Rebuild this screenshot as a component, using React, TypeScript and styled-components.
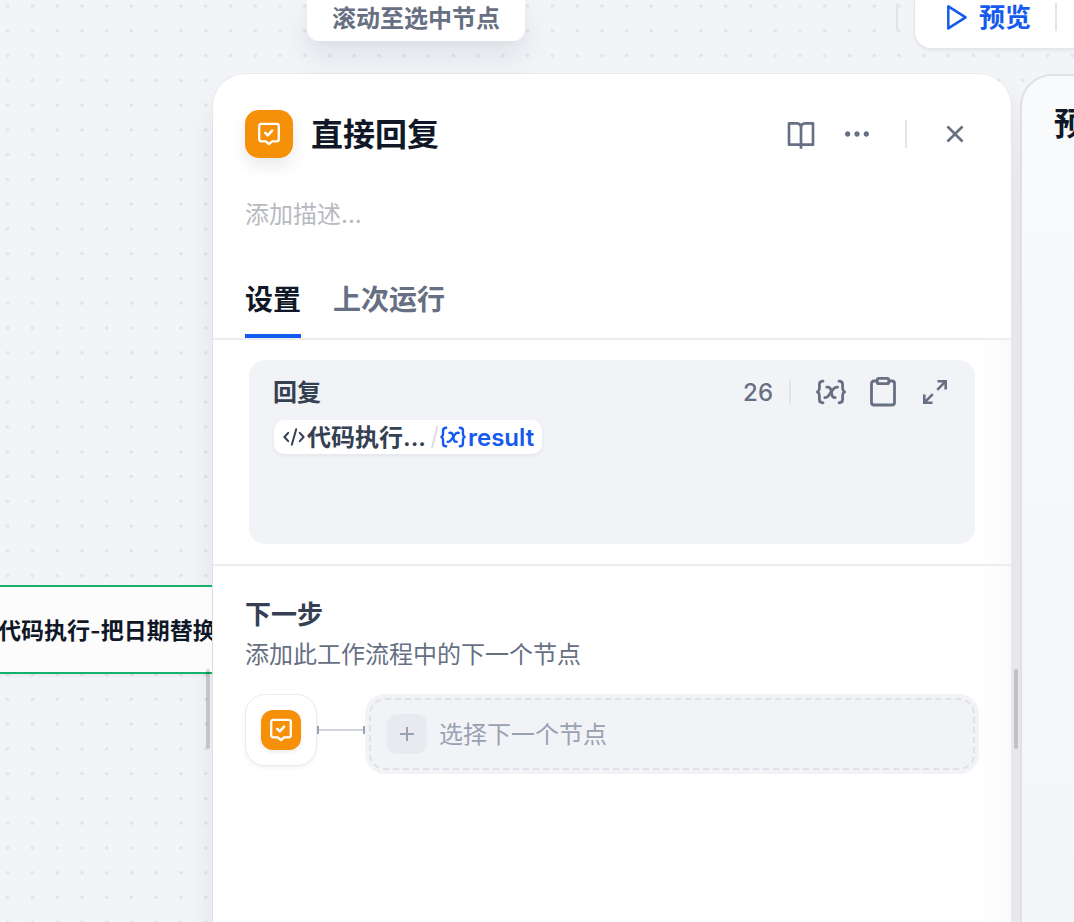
import React, { useState } from "react";
import styled, { createGlobalStyle } from "styled-components";
import { RiAddLine, RiBookOpenLine, RiCloseLine, RiMoreFill } from "react-icons/ri";

const color = {
  title: "#101828",
  text: "#354052",
  muted: "#676f83",
  faint: "#98a2b2",
  placeholder: "#b8bac0",
  blue: "#155aef",
  orange: "#f79009",
  green: "#17b26a",
  canvas: "#f2f4f8",
  field: "#f2f3f7",
  line: "#ededf0",
};

const GlobalStyle = createGlobalStyle`
  *, *::before, *::after { box-sizing: border-box; }
  body {
    margin: 0;
    background: ${color.canvas};
    font-family: Inter, "Noto Sans CJK SC", sans-serif;
    color: ${color.text};
    overflow: hidden;
  }
  button, input { font: inherit; color: inherit; border: 0; background: none; padding: 0; margin: 0; }
  button { cursor: pointer; }
  h1, h2, h3, p { margin: 0; }
  svg { display: block; flex: none; }
`;

const Page = styled.div`
  position: relative;
  display: flex;
  flex-direction: column;
  min-height: 100vh;
  overflow: hidden;
`;

const DotGrid = styled.svg`
  position: absolute;
  inset: 0;
  width: 100%;
  height: 100%;
`;

const TopBar = styled.header`
  position: relative;
  display: flex;
  align-items: flex-start;
  justify-content: space-between;
  height: 74px;
  padding-left: 307px;
`;

const ScrollButton = styled.button`
  height: 41px;
  padding: 0 25px 4px;
  border-radius: 0 0 12px 12px;
  background: #fff;
  box-shadow: 0 16px 32px rgba(16, 24, 40, 0.08), 0 4px 8px rgba(16, 24, 40, 0.03);
  color: ${color.muted};
  font-size: 24px;
  font-weight: 600;
  line-height: 36px;
  white-space: nowrap;
`;

const TopActions = styled.div`
  display: flex;
  align-items: flex-start;
  gap: 17px;
`;

const Divider = styled.span<{ $height: number; $top?: number }>`
  flex: none;
  width: 2px;
  height: ${(p) => p.$height}px;
  margin-top: ${(p) => p.$top ?? 0}px;
  background: #e3e4e8;
`;

const RunBar = styled.div`
  display: flex;
  align-items: flex-start;
  width: 159px;
  height: 48px;
  padding-left: 29px;
  border-radius: 0 0 0 16px;
  background: #fff;
  box-shadow: 0 0 0 1px #e3e5ea, 0 2px 4px rgba(16, 24, 40, 0.08);
`;

const PreviewButton = styled.button`
  display: flex;
  align-items: center;
  gap: 11px;
  height: 36px;
  margin-right: 24px;
  color: ${color.blue};
  font-size: 26px;
  font-weight: 600;
  line-height: 36px;
  white-space: nowrap;
`;

const Main = styled.main`
  position: relative;
  display: flex;
  flex: 1;
`;

const CanvasColumn = styled.div`
  position: relative;
  flex: none;
  width: 213px;
`;

const FlowNode = styled.div`
  position: absolute;
  top: 511px;
  left: -40px;
  right: 1px;
  height: 89px;
  padding: 3px 0 0 38px;
  overflow: hidden;
  border: 2px solid ${color.green};
  border-width: 2px 0;
  background: #fcfcfd;
  box-shadow: 0 2px 4px rgba(16, 24, 40, 0.05);
  color: ${color.title};
  font-size: 23px;
  font-weight: 600;
  line-height: 82px;
  white-space: nowrap;
`;

const Handle = styled.span`
  width: 4px;
  height: 80px;
  margin-top: 595px;
  border-radius: 2px;
  background: rgba(0, 0, 0, 0.17);
`;

const CanvasHandle = styled(Handle)`
  position: absolute;
  top: 0;
  right: 3px;
`;

const Gutter = styled.div`
  display: flex;
  flex: none;
  justify-content: center;
  width: 9px;
  background: linear-gradient(rgba(231, 232, 236, 0) 20px, #e7e8ec 130px);
`;

const Panel = styled.section`
  display: flex;
  flex: 1;
  flex-direction: column;
  min-width: 0;
  border-radius: 32px 32px 0 0;
  background: #fff;
  box-shadow: 0 0 0 1px rgba(16, 24, 40, 0.04), 0 24px 32px rgba(16, 24, 40, 0.08);
`;

const PanelHeader = styled.div`
  display: flex;
  align-items: center;
  padding: 36px 40px 0 32px;
`;

const Badge = styled.span<{ $size: number; $radius: number }>`
  display: grid;
  place-items: center;
  flex: none;
  width: ${(p) => p.$size}px;
  height: ${(p) => p.$size}px;
  border-radius: ${(p) => p.$radius}px;
  background: ${color.orange};
  box-shadow: 0 ${(p) => (p.$size > 40 ? "8px 16px" : "2px 4px")} rgba(16, 24, 40, 0.09);
`;

const Title = styled.h1`
  flex: 1;
  margin-left: 18px;
  padding-top: 2px;
  color: ${color.title};
  font-size: 32px;
  font-weight: 600;
  line-height: 46px;
`;

const HeaderActions = styled.div`
  display: flex;
  align-items: center;
  gap: 24px;
  color: ${color.muted};
`;

const MoreButton = styled.button`
  margin-right: 8px;
`;

const CloseButton = styled.button`
  margin-left: 8px;
`;

const Description = styled.input`
  display: block;
  width: calc(100% - 64px);
  height: 34px;
  margin: 40px 32px 0;
  outline: 0;
  font-size: 24px;
  line-height: 34px;
  &::placeholder { color: ${color.placeholder}; opacity: 1; }
`;

const Tabs = styled.div`
  display: flex;
  gap: 32px;
  margin-top: 32px;
  padding: 0 32px;
  border-bottom: 2px solid ${color.line};
`;

const Tab = styled.button<{ $active: boolean }>`
  padding: 16px 0 14px;
  border-bottom: 4px solid ${(p) => (p.$active ? color.blue : "transparent")};
  color: ${(p) => (p.$active ? color.title : color.muted)};
  font-size: 28px;
  font-weight: 600;
  line-height: 40px;
`;

const PanelBody = styled.div`
  flex: 1;
  background: linear-gradient(to left, #fafafa, #fff 32px);
`;

const ReplySection = styled.div`
  padding: 20px 36px;
  border-bottom: 2px solid ${color.line};
`;

const Editor = styled.div`
  min-height: 184px;
  padding: 12px 24px;
  border-radius: 16px;
  background: ${color.field};
`;

const EditorHeader = styled.div`
  display: flex;
  align-items: center;
  height: 40px;
  color: ${color.muted};
`;

const EditorTitle = styled.h2`
  flex: 1;
  padding-top: 2px;
  color: ${color.text};
  font-size: 24px;
  font-weight: 600;
  line-height: 38px;
`;

const Count = styled.span`
  margin-right: 16px;
  padding-top: 2px;
  font-size: 24px;
  font-weight: 500;
  line-height: 38px;
`;

const EditorTools = styled.div`
  display: flex;
  align-items: center;
  gap: 20px;
  margin-left: 24px;
`;

const Chip = styled.span`
  display: inline-flex;
  align-items: center;
  height: 34px;
  margin: 8px 0 0 1px;
  padding: 0 8px;
  border-radius: 10px;
  background: #fff;
  box-shadow: 0 2px 4px rgba(16, 24, 40, 0.06);
  font-size: 24px;
  font-weight: 600;
  line-height: 32px;
  white-space: nowrap;
`;

const ChipText = styled.span`
  padding-top: 2px;
`;

const ChipSource = styled(ChipText)`
  margin: 0 4px 0 1px;
`;

const ChipVariable = styled.span`
  display: inline-flex;
  align-items: center;
  gap: 1px;
  color: ${color.blue};
`;

const NextSection = styled.div`
  padding: 29px 32px;
`;

const NextTitle = styled.h2`
  font-size: 26px;
  font-weight: 600;
  line-height: 40px;
`;

const NextHint = styled.p`
  color: ${color.muted};
  font-size: 24px;
  line-height: 40px;
`;

const NextRow = styled.div`
  display: flex;
  align-items: flex-start;
  margin-top: 19px;
`;

const NodeTile = styled.div`
  display: grid;
  place-items: center;
  flex: none;
  width: 72px;
  height: 72px;
  border: 1px solid #e9ebf0;
  border-radius: 20px;
  background: #fff;
  box-shadow: 0 2px 4px rgba(16, 24, 40, 0.05);
`;

const Connector = styled.div`
  display: flex;
  align-items: center;
  flex: none;
  width: 48px;
  height: 72px;
  &::before, &::after {
    content: "";
    width: 2px;
    height: 8px;
    background: ${color.faint};
  }
`;

const ConnectorLine = styled.span`
  flex: 1;
  height: 2px;
  background: #d0d5dc;
`;

const AddNext = styled.button`
  flex: 1;
  padding: 4px;
  border-radius: 20px;
  background: ${color.field};
`;

const AddNextInner = styled.span`
  display: flex;
  align-items: center;
  gap: 12px;
  height: 72px;
  padding: 0 16px;
  border: 2px dashed #e0e1e6;
  border-radius: 16px;
  color: ${color.faint};
  font-size: 24px;
  line-height: 36px;
`;

const AddLabel = styled.span`
  padding-top: 2px;
`;

const AddMark = styled.span`
  display: grid;
  place-items: center;
  width: 40px;
  height: 40px;
  border-radius: 10px;
  background: #e9eaef;
`;

const PreviewPanel = styled.aside`
  flex: none;
  width: 54px;
  padding: 28px 0 0 32px;
  overflow: hidden;
  border: 2px solid #e0e1e6;
  border-width: 2px 0 0 2px;
  border-radius: 32px 0 0 0;
  background: linear-gradient(#f9fafb, #f3f5f8);
`;

const PreviewTitle = styled.h2`
  color: ${color.title};
  font-size: 32px;
  font-weight: 600;
  line-height: 40px;
  white-space: nowrap;
`;

const AnswerIcon = () => (
  <svg width="24" height="24" viewBox="0 0 24 24" fill="none" stroke="#fff" strokeWidth="2.3" strokeLinecap="round" strokeLinejoin="round">
    <path d="M4.2 1.9h15.6a2 2 0 0 1 2 2v13.4a2 2 0 0 1-2 2h-4.6L12 22l-3.2-2.7H4.2a2 2 0 0 1-2-2V3.9a2 2 0 0 1 2-2Z" />
    <path d="m8.3 10.9 2.5 2.4 4.3-4.6" strokeWidth="2.5" />
  </svg>
);

const PlayIcon = () => (
  <svg width="24" height="28" viewBox="0 0 24 28" fill="none" stroke="currentColor" strokeWidth="2.5" strokeLinejoin="round">
    <path d="M4.3 2.400v22L21.6 13.400Z" />
  </svg>
);

const VariableIcon = ({ width, height }: { width: number; height: number }) => (
  <svg width={width} height={height} viewBox="0 0 32 28" fill="none" stroke="currentColor" strokeWidth="2.8" strokeLinecap="round" strokeLinejoin="round">
    <path d="M8 3.2c-2.6 0-3.6 1-3.6 3.2v4.2c0 1.6-.6 2.7-2 3.4 1.4.7 2 1.8 2 3.4v4.2c0 2.2 1 3.2 3.6 3.2" />
    <path d="M24 3.2c2.6 0 3.6 1 3.6 3.2v4.2c0 1.6.6 2.7 2 3.4-1.4.7-2 1.8-2 3.4v4.2c0 2.2-1 3.2-3.6 3.2" />
    <path d="M11.8 9.2c2.5-.5 3.4.4 4 2.4l1.2 5.4c.5 2 1.3 3 3.2 2.6" />
    <path d="M22.6 9.2c-2-.5-3.2.3-4.4 2l-4.4 6.200c-1.200 1.700-2.300 2.700-4 2.200" />
  </svg>
);

const ClipboardIcon = () => (
  <svg width="32" height="32" viewBox="0 0 32 32" fill="none" stroke="currentColor" strokeWidth="2.8" strokeLinejoin="round">
    <path d="M10 5H7a2.500 2.500 0 0 0-2.500 2.500v19A2.500 2.500 0 0 0 7 29h18a2.500 2.500 0 0 0 2.500-2.500v-19A2.500 2.500 0 0 0 25 5h-3" />
    <rect x="10.300" y="2.300" width="11.400" height="5.400" rx="1.500" />
  </svg>
);

const ExpandIcon = () => (
  <svg width="32" height="32" viewBox="0 0 32 32" fill="none" stroke="currentColor" strokeWidth="2.600">
    <path d="M18.500 5.300h8.200v8.200M26.200 5.800l-8 8" />
    <path d="M13.500 26.700H5.300v-8.200M5.800 26.200l8-8" />
  </svg>
);

const CodeIcon = () => (
  <svg width="24" height="20" viewBox="0 0 24 20" fill="none" stroke="currentColor" strokeWidth="2" strokeLinecap="round" strokeLinejoin="round">
    <path d="M6.200 5.800 2.400 10l3.800 4.200M17.800 5.800l3.800 4.200-3.800 4.200M14.200 2.200 9.800 17.800" />
  </svg>
);

const SlashIcon = () => (
  <svg width="9" height="24" viewBox="0 0 9 24" fill="none" stroke="#dcdee3" strokeWidth="2">
    <path d="M7.500 1 2 23" />
  </svg>
);

const tabs = ["设置", "上次运行"];

export default function App() {
  const [active, setActive] = useState(0);
  return (
    <>
      <GlobalStyle />
      <Page>
        <DotGrid aria-hidden="true">
          <defs>
            <pattern id="dots" x="-4.700" y="-6.300" width="24.760" height="24.760" patternUnits="userSpaceOnUse">
              <circle cx="12.380" cy="12.380" r="1.800" fill="#e1e3eb" />
            </pattern>
          </defs>
          <rect width="100%" height="100%" fill="url(#dots)" />
        </DotGrid>

        <TopBar>
          <ScrollButton>滚动至选中节点</ScrollButton>
          <TopActions>
            <Divider $height={28} $top={3} />
            <RunBar>
              <PreviewButton>
                <PlayIcon />
                预览
              </PreviewButton>
              <Divider $height={28} $top={3} />
            </RunBar>
          </TopActions>
        </TopBar>

        <Main>
          <CanvasColumn>
            <FlowNode>代码执行-把日期替换</FlowNode>
            <CanvasHandle />
          </CanvasColumn>

          <Panel>
            <PanelHeader>
              <Badge $size={48} $radius={14}>
                <AnswerIcon />
              </Badge>
              <Title>直接回复</Title>
              <HeaderActions>
                <button aria-label="帮助文档"><RiBookOpenLine size={32} /></button>
                <MoreButton aria-label="更多"><RiMoreFill size={32} /></MoreButton>
                <Divider $height={28} />
                <CloseButton aria-label="关闭"><RiCloseLine size={32} /></CloseButton>
              </HeaderActions>
            </PanelHeader>
            <Description aria-label="描述" placeholder="添加描述..." />
            <Tabs role="tablist">
              {tabs.map((label, i) => (
                <Tab key={label} role="tab" aria-selected={i === active} $active={i === active} onClick={() => setActive(i)}>
                  {label}
                </Tab>
              ))}
            </Tabs>

            <PanelBody>
              <ReplySection>
                <Editor>
                  <EditorHeader>
                    <EditorTitle>回复</EditorTitle>
                    <Count>26</Count>
                    <Divider $height={24} />
                    <EditorTools>
                      <button aria-label="插入变量"><VariableIcon width={32} height={28} /></button>
                      <button aria-label="复制"><ClipboardIcon /></button>
                      <button aria-label="展开"><ExpandIcon /></button>
                    </EditorTools>
                  </EditorHeader>
                  <Chip>
                    <CodeIcon />
                    <ChipSource>代码执行...</ChipSource>
                    <SlashIcon />
                    <ChipVariable>
                      <VariableIcon width={28} height={24} />
                      <ChipText>result</ChipText>
                    </ChipVariable>
                  </Chip>
                </Editor>
              </ReplySection>

              <NextSection>
                <NextTitle>下一步</NextTitle>
                <NextHint>添加此工作流程中的下一个节点</NextHint>
                <NextRow>
                  <NodeTile>
                    <Badge $size={40} $radius={12}>
                      <AnswerIcon />
                    </Badge>
                  </NodeTile>
                  <Connector>
                    <ConnectorLine />
                  </Connector>
                  <AddNext>
                    <AddNextInner>
                      <AddMark><RiAddLine size={24} /></AddMark>
                      <AddLabel>选择下一个节点</AddLabel>
                    </AddNextInner>
                  </AddNext>
                </NextRow>
              </NextSection>
            </PanelBody>
          </Panel>

          <Gutter>
            <Handle />
          </Gutter>

          <PreviewPanel>
            <PreviewTitle>预览</PreviewTitle>
          </PreviewPanel>
        </Main>
      </Page>
    </>
  );
}
